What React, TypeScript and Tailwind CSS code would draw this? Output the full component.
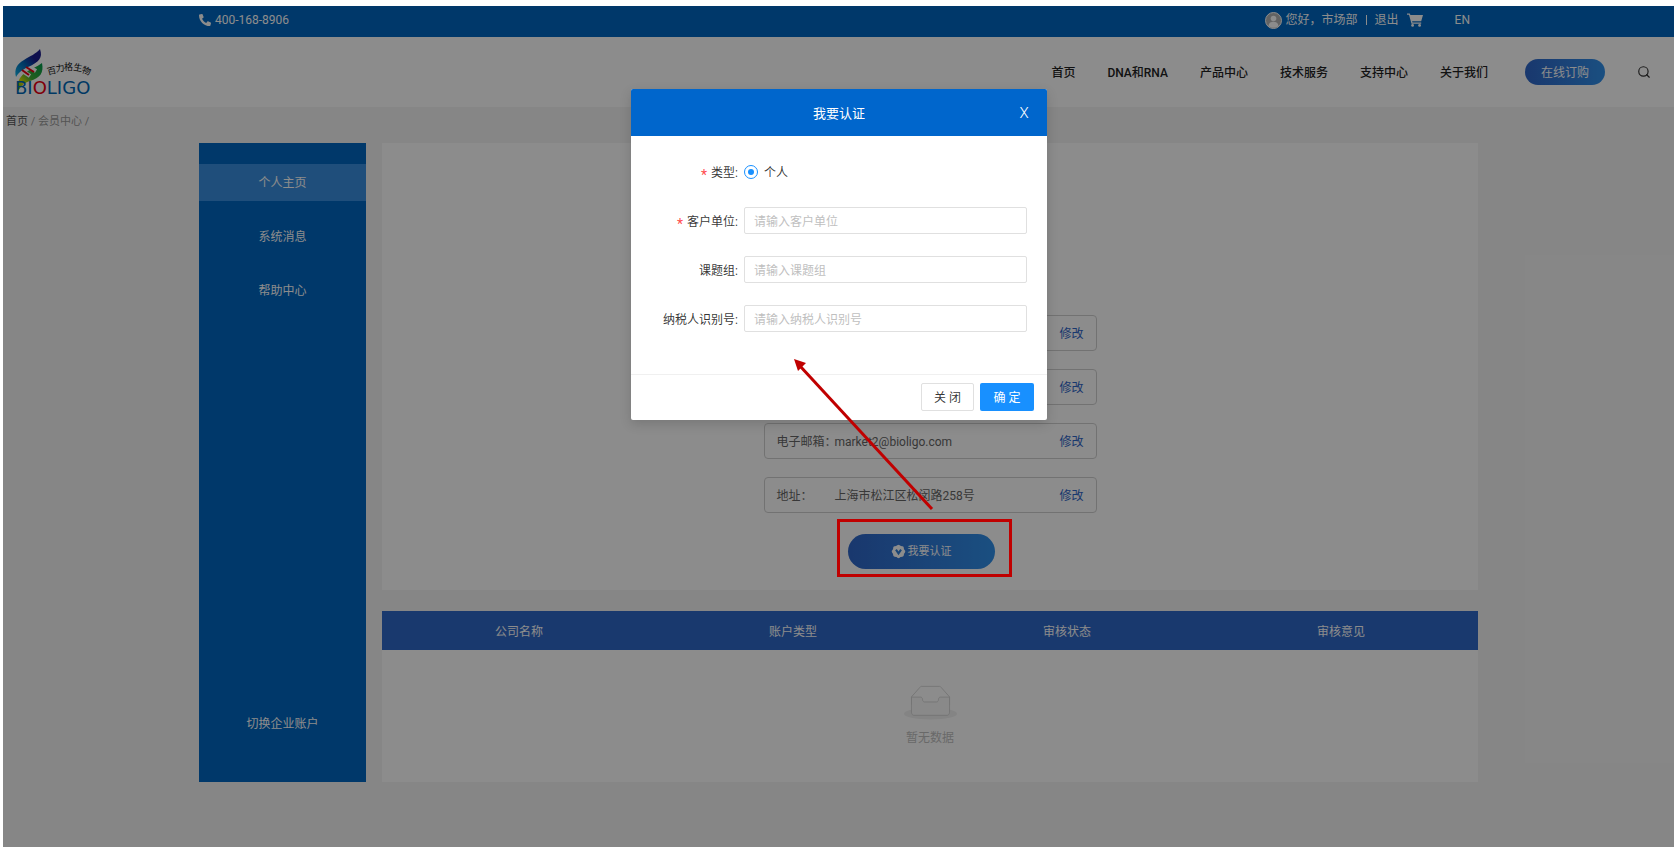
import type { ReactNode } from "react";
import { Search } from "lucide-react";
import { FaPhone } from "react-icons/fa";

const navItems = ["首页", "DNA和RNA", "产品中心", "技术服务", "支持中心", "关于我们"];

const menuItems = ["个人主页", "系统消息", "帮助中心"];

const profileRows = [
  { id: "name", label: "", value: "" },
  { id: "phone", label: "", value: "" },
  { id: "email", label: "电子邮箱：", value: "market2@bioligo.com" },
  { id: "address", label: "地址：", value: "上海市松江区松闵路258号" },
];

const columns = ["公司名称", "账户类型", "审核状态", "审核意见"];

function Logo() {
  return (
    <svg width="82" height="58" viewBox="0 0 82 58" role="img" aria-label="BIOLIGO 百力格生物">
      <defs>
        <linearGradient id="helixTop" x1="1" y1="0" x2="0" y2="1">
          <stop offset="0" stopColor="#1a1a8c" />
          <stop offset="0.3" stopColor="#1a1a8c" />
          <stop offset="0.6" stopColor="#0068b7" />
          <stop offset="1" stopColor="#12b5e8" />
        </linearGradient>
        <linearGradient id="helixBottom" x1="1" y1="0" x2="0" y2="1">
          <stop offset="0" stopColor="#009a4e" />
          <stop offset="0.5" stopColor="#3fae35" />
          <stop offset="0.75" stopColor="#d9dc00" />
          <stop offset="1" stopColor="#45b035" />
        </linearGradient>
        <linearGradient id="ringO" x1="0" y1="0" x2="1" y2="1">
          <stop offset="0.6" stopColor="#e60012" />
          <stop offset="0.7" stopColor="#009a4e" />
        </linearGradient>
      </defs>
      <path
        d="M28 20C23 24 16 26 11 30C5 34 3 40 4 48C8 42 10 40 16 38C26 35 30 30 28 20Z"
        fill="url(#helixBottom)"
      />
      <path d="M7 27L16 33M12 22L22 28" stroke="#fff" strokeWidth="4" />
      <path
        d="M26 6C22 11 16 13 10 17C3 21 0 26 2 34C5 29 8 27 14 24C25 19 29 15 26 6Z"
        fill="url(#helixTop)"
      />
      <path d="M8 27L15 32M12 24L20 29" stroke="#e60012" strokeWidth="2" />
      <g fill="#111" fontFamily="'Noto Sans CJK SC', sans-serif" fontSize="9">
        <text transform="translate(34 32) rotate(-14)">百</text>
        <text transform="translate(42 29) rotate(-8)">力</text>
        <text transform="translate(50 27)">格</text>
        <text transform="translate(59 27) rotate(10)">生</text>
        <text transform="translate(67 29) rotate(22)">物</text>
      </g>
      <text x="1" y="51" fill="#0068b7" fontFamily="'DejaVu Sans', sans-serif" fontSize="18">
        BI<tspan fill="url(#ringO)">O</tspan>LIGO
      </text>
    </svg>
  );
}

function CartIcon() {
  return (
    <svg width="16" height="14" viewBox="0 0 16 14" fill="currentColor" aria-hidden="true">
      <path d="M0 0.5h2.8l.6 1.5H16l-1.8 6.2H5.1l.4 1.3h8.7v1.2H4.5L2 1.7H0z" />
      <circle cx="5.6" cy="12.4" r="1.4" />
      <circle cx="12.6" cy="12.4" r="1.4" />
    </svg>
  );
}

function BadgeIcon() {
  return (
    <svg width="15" height="15" viewBox="0 0 16 16" aria-hidden="true">
      <g fill="currentColor">
        <circle cx="8" cy="8" r="6.500" />
        <rect x="2.500" y="2.500" width="11" height="11" rx="1.500" />
        <rect x="2.500" y="2.500" width="11" height="11" rx="1.500" transform="rotate(45 8 8)" />
      </g>
      <path d="M5.300 6L8 10l2.700-4" fill="none" stroke="#2f7fd8" strokeWidth="2.200" />
    </svg>
  );
}

function EmptyIcon() {
  return (
    <svg width="53" height="35" viewBox="0 0 64 41" aria-hidden="true">
      <g transform="translate(0 1)" fill="none" fillRule="evenodd">
        <ellipse fill="#f0f0f0" cx="32" cy="33" rx="32" ry="7" />
        <g fillRule="nonzero" stroke="#d0d0d0">
          <path d="M55 12.760L44.854 1.258C44.367.474 43.656 0 42.907 0H21.093c-.749 0-1.460.474-1.947 1.257L9 12.761V22h46v-9.240z" />
          <path
            d="M41.613 15.931c0-1.605.994-2.930 2.227-2.931H55v18.137C55 33.260 53.680 35 52.050 35h-40.100C10.320 35 9 33.259 9 31.137V13h11.160c1.233 0 2.227 1.323 2.227 2.928v.022c0 1.605 1.005 2.901 2.237 2.901h14.752c1.232 0 2.237-1.308 2.237-2.913v-.007z"
            fill="#fafafa"
          />
        </g>
      </g>
    </svg>
  );
}

function TopBar() {
  return (
    <div className="bg-[#0066c2] text-white">
      <div className="mx-auto flex h-[31px] max-w-[1279px] items-center justify-between pr-2 pb-[3px]">
        <a href="#phone" className="flex items-center gap-1">
          <FaPhone size={12} className="-scale-x-100" />
          400-168-8906
        </a>
        <div className="flex items-center">
          <svg width="17" height="17" viewBox="0 0 17 17" className="mr-1" aria-hidden="true">
            <circle cx="8.500" cy="8.500" r="8" fill="#b5b5b5" stroke="#fff" />
            <circle cx="8.500" cy="6.500" r="2.800" fill="#fff" />
            <path d="M3.500 14c.4-3 2.300-4.300 5-4.300s4.600 1.300 5 4.300c-2.700 2.300-7.300 2.300-10 0z" fill="#fff" />
          </svg>
          <span>您好，市场部</span>
          <span className="mx-2 h-[10px] w-px bg-white" />
          <a href="#logout" className="mr-2">退出</a>
          <a href="#cart" aria-label="购物车">
            <CartIcon />
          </a>
          <a href="#en" className="ml-8">EN</a>
        </div>
      </div>
    </div>
  );
}

function Header() {
  return (
    <header className="flex h-[70px] items-center justify-between bg-white pr-[23px] pl-[11px]">
      <a href="#home">
        <Logo />
      </a>
      <div className="flex items-center">
        <nav className="flex gap-8 pt-0.5 font-medium text-[#222]">
          {navItems.map((item) => (
            <a key={item} href="#nav">{item}</a>
          ))}
        </nav>
        <button className="ml-[37px] h-[26px] w-20 rounded-full bg-linear-to-r from-[#2f66c8] to-[#3090ea] pt-0.5 text-white">
          在线订购
        </button>
        <button className="ml-8 text-[#333]" aria-label="搜索">
          <Search size={14} strokeWidth={2} />
        </button>
      </div>
    </header>
  );
}

function Sidebar() {
  return (
    <aside className="flex w-[167px] shrink-0 flex-col justify-between bg-[#0066c2] pt-[21px] pb-10 text-center leading-[35px] text-white">
      <nav className="flex flex-col gap-[17px]">
        {menuItems.map((item, i) => (
          <a key={item} href="#menu" className={i === 0 ? "bg-[#3a8fe0] pt-0.5" : "pt-0.5"}>
            {item}
          </a>
        ))}
      </nav>
      <a href="#switch">切换企业账户</a>
    </aside>
  );
}

function Profile() {
  return (
    <section className="bg-white pt-[172px] pb-[21px]">
      <ul className="mx-auto flex w-[333px] flex-col gap-[18px] text-[#666]">
        {profileRows.map((row) => (
          <li
            key={row.id}
            className="flex h-9 items-center rounded-sm border border-[#d0d0d0] px-3 pt-0.5"
          >
            <span className="w-[58px] shrink-0 whitespace-nowrap">{row.label}</span>
            <span className="flex-1">{row.value}</span>
            <button className="text-[#2f66c8]">修改</button>
          </li>
        ))}
      </ul>
      <div className="mt-[21px] flex justify-center pr-[18px]">
        <div className="relative">
          <button className="flex h-[35px] w-[147px] items-center justify-center gap-0.5 rounded-full bg-linear-to-r from-[#2f66c8] to-[#3090ea] text-[11px] text-white">
            <BadgeIcon />
            <span className="pt-0.5">我要认证</span>
          </button>
          <div className="pointer-events-none absolute -top-[15px] -right-[17px] -bottom-2 -left-[11px] z-20 border-3 border-[#c00000]" />
        </div>
      </div>
    </section>
  );
}

function AuditTable() {
  return (
    <table className="w-full table-fixed bg-white">
      <thead>
        <tr className="h-[39px] bg-[#2f69c8] text-white">
          {columns.map((col) => (
            <th key={col} className="pt-0.5 font-normal">{col}</th>
          ))}
        </tr>
      </thead>
      <tbody>
        <tr>
          <td colSpan={4} className="h-[132px] text-[#bfbfbf]">
            <div className="flex flex-col items-center gap-[10px] pb-0.5">
              <EmptyIcon />
              暂无数据
            </div>
          </td>
        </tr>
      </tbody>
    </table>
  );
}

function FormRow({
  id,
  label,
  required,
  children,
}: {
  id: string;
  label: string;
  required?: boolean;
  children: ReactNode;
}) {
  return (
    <div className="flex h-[27px] items-center">
      <label htmlFor={id} className="mr-1.5 flex w-[107px] items-center justify-end pt-0.5">
        {required && <span className="mr-1 pt-1 text-sm leading-none text-[#ff4d4f]">*</span>}
        {label}:
      </label>
      {children}
    </div>
  );
}

const inputClass =
  "h-[27px] min-w-0 flex-1 rounded-xs border border-[#e0e0e0] px-[9px] pt-0.5 outline-none placeholder:text-[#bfbfbf]";

function CertifyDialog() {
  return (
    <div
      role="dialog"
      aria-label="我要认证"
      className="relative w-[416px] rounded-xs bg-white text-black/80 shadow-[0_4px_12px_rgba(0,0,0,0.15)]"
    >
      <div className="flex h-[47px] items-center rounded-t-xs bg-[#0066cc] px-[18px] pt-0.5 text-[13px] text-white">
        <h2 className="flex-1 pl-[10px] text-center">我要认证</h2>
        <button className="w-[10px] text-[15px] font-light" aria-label="关闭">X</button>
      </div>
      <form className="flex flex-col gap-[22px] border-b border-[#f0f0f0] pt-[22px] pr-5 pb-[42px]">
        <FormRow id="type" label="类型" required>
          <input
            id="type"
            type="radio"
            name="type"
            defaultChecked
            className="size-[14px] appearance-none rounded-full border border-[#1890ff] bg-[#1890ff] bg-clip-content p-[3px]"
          />
          <label htmlFor="type" className="ml-1.5 pt-0.5">个人</label>
        </FormRow>
        <FormRow id="company" label="客户单位" required>
          <input id="company" placeholder="请输入客户单位" className={inputClass} />
        </FormRow>
        <FormRow id="group" label="课题组">
          <input id="group" placeholder="请输入课题组" className={inputClass} />
        </FormRow>
        <FormRow id="tax" label="纳税人识别号">
          <input id="tax" placeholder="请输入纳税人识别号" className={inputClass} />
        </FormRow>
      </form>
      <div className="flex justify-end gap-1.5 px-[13px] pt-2 pb-[9px]">
        <button className="h-7 w-[53px] rounded-xs border border-[#e0e0e0] pt-0.5">关 闭</button>
        <button className="h-7 w-[54px] rounded-xs bg-[#1890ff] pt-0.5 text-white">确 定</button>
      </div>
      {/* arrow from the certify button to the form */}
      <svg
        width="150"
        height="160"
        viewBox="0 0 150 160"
        className="pointer-events-none absolute top-[266px] left-[160px]"
        aria-hidden="true"
      >
        <path d="M9 11L141 154" stroke="#c00000" strokeWidth="3" />
        <path d="M3 4L15 8L7 16Z" fill="#c00000" />
      </svg>
    </div>
  );
}

export default function App() {
  return (
    <div className="flex min-h-screen flex-col bg-white pt-1.5 pb-0.5 pl-[3px] font-[Roboto,'Noto_Sans_CJK_SC',sans-serif] text-xs">
      <div className="relative flex flex-1 flex-col bg-[#f5f5f5]">
        <TopBar />
        <Header />
        <div className="h-9 px-[3px] pt-[5px] text-[11px] leading-5 text-[#999]">
          <a href="#home" className="text-[#555]">首页</a> / 会员中心 /
        </div>
        <main className="mx-auto flex w-full max-w-[1279px] items-stretch gap-4">
          <Sidebar />
          <div className="flex min-w-0 flex-1 flex-col gap-[21px]">
            <Profile />
            <AuditTable />
          </div>
        </main>
        <div className="absolute inset-0 z-10 flex items-start justify-center bg-black/45 pt-[83px] pl-px">
          <CertifyDialog />
        </div>
      </div>
    </div>
  );
}
